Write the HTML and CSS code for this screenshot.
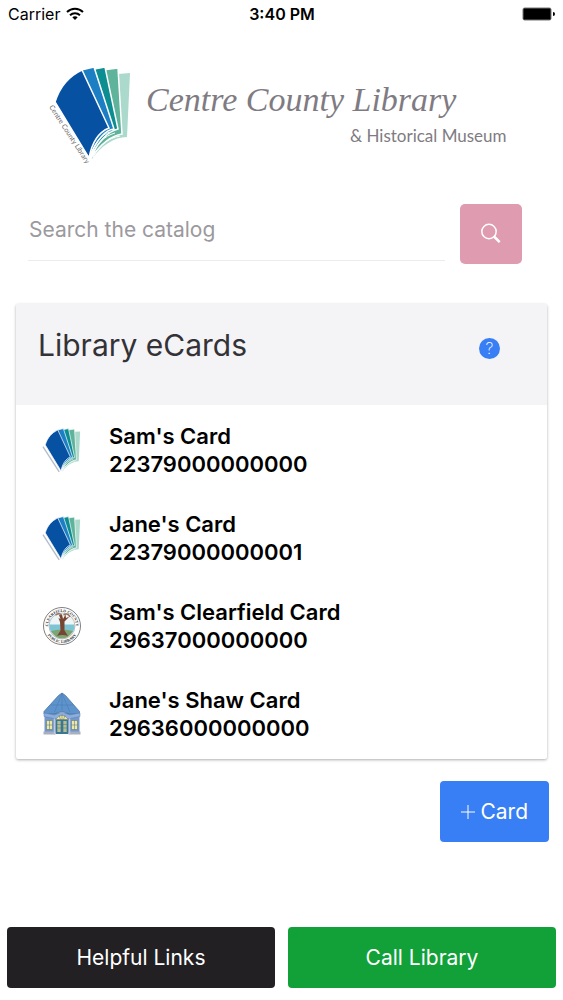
FILE: index.html
```html
<!DOCTYPE html>
<html lang="en">
<head>
<meta charset="utf-8">
<meta name="viewport" content="width=device-width, initial-scale=1">
<title>Centre County Library</title>
<link rel="stylesheet" href="styles.css">
</head>
<body>
<svg class="defs" width="0" height="0" aria-hidden="true">
  <symbol id="book" viewBox="0 0 86 98">
    <path d="M70 10 82 9 79 73C66 73 53 82 44 95L41 88 64 67Z" fill="#abd9cb"/>
    <path d="M54 6 70 4 74 70C60 72 50 84 43 94L58 62Z" fill="#5fb39b" stroke="#fff" stroke-width="1.5"/>
    <path d="M41 6 57 3 70 65C57 68 48 82 42 94L53 60Z" fill="#0c8d92" stroke="#fff" stroke-width="1.5"/>
    <path d="M29 7 46 3 66 65C55 66 47 80 41 94L48 58Z" fill="#1c7fc3" stroke="#fff" stroke-width="1.5"/>
    <path d="M7 38C12 22 21 12 34 6L61 64C51 68 44 78 41 94Z" fill="#0751a3" stroke="#fff" stroke-width="1.5"/>
    <path d="M42 93C46 80 52 71 62 68M43 93C49 80 56 72 67 69M45 93C52 81 60 74 72 72" fill="none" stroke="#fff"/>
  </symbol>
</svg>
<div class="app">
  <div class="status">
    <div class="carrier">Carrier
      <svg width="18" height="14" viewBox="0 0 18 14" fill="none" stroke="#000" stroke-width="2" aria-hidden="true"><path d="M1 5C5.500 .6 12.500 .6 17 5M4 8.200C6.800 5.500 11.200 5.500 14 8.200"/><path d="M6.300 10.300Q9 8 11.700 10.300L9 13Z" fill="#000" stroke="none"/></svg>
    </div>
    <div class="time">3:40 PM</div>
    <svg class="battery" width="34" height="14" viewBox="0 0 34 14" aria-hidden="true"><rect x="1" y="1" width="28" height="12" rx="1.500" stroke="#777"/><path d="M31 5Q33 5 33 7T31 9Z"/></svg>
  </div>

  <header class="brand">
    <svg class="brand-mark" width="86" height="100" viewBox="0 0 86 100" role="img" aria-label="Open book">
      <use href="#book" width="86" height="98"/>
      <text class="spine" transform="translate(1 43) rotate(57)">Centre County Library</text>
    </svg>
    <div class="brand-text">
      <div class="brand-name">Centre County Library</div>
      <div class="brand-sub">&amp; Historical Museum</div>
    </div>
  </header>

  <form class="search">
    <input type="search" aria-label="Search the catalog" placeholder="Search the catalog">
    <button class="search-btn" type="button" aria-label="Search">
      <svg width="22" height="22" viewBox="0 0 22 22" fill="none" stroke="#fff" aria-hidden="true"><circle cx="9" cy="8.500" r="7.200" stroke-width="1.500"/><path d="m14 13.500 5.700 5.700" stroke-width="2.500"/></svg>
    </button>
  </form>

  <main class="cards">
    <div class="cards-head">
      <h1>Library eCards</h1>
      <button class="help" type="button" aria-label="Help">?</button>
    </div>
    <ul>
      <li><svg class="thumb" viewBox="0 0 86 98" aria-hidden="true"><path d="m2 42 35 54" stroke="#b5bec8" stroke-width="3"/><use href="#book" width="86" height="98"/></svg><div><div>Sam's Card</div><div>22379000000000</div></div></li>
      <li><svg class="thumb" viewBox="0 0 86 98" aria-hidden="true"><path d="m2 42 35 54" stroke="#b5bec8" stroke-width="3"/><use href="#book" width="86" height="98"/></svg><div><div>Jane's Card</div><div>22379000000001</div></div></li>
      <li>
        <svg class="thumb" viewBox="0 0 80 90" aria-hidden="true">
          <defs><path id="ring-top" d="M12 45A28 28 0 0 1 68 45"/><path id="ring-bottom" d="M6 45A34 34 0 0 0 74 45"/></defs>
          <circle cx="40" cy="45" r="37" fill="#fff" stroke="#555" stroke-width="1.500"/>
          <circle cx="40" cy="45" r="26" fill="#eef5f6" stroke="#888"/>
          <path d="M15 42H65Q66 52 60 59H20Q14 52 15 42Z" fill="#7fc4d4"/>
          <path d="M18 55Q40 49 62 55Q54 70 40 70T18 55Z" fill="#7da574"/>
          <path d="M34 23 37 31 33 29 36 37 37 54 30 65Q40 61 52 65L45 54 45 36 55 26 48 29 47 22 42 31 40 22Z" fill="#774632"/>
          <path d="M27 23q8-5 12 0M43 23q9-5 13 4" fill="none" stroke="#9a7461" stroke-width="3"/>
          <text class="seal"><textPath href="#ring-top" startOffset="50%">CLEARFIELD COUNTY</textPath></text>
          <text class="seal"><textPath href="#ring-bottom" startOffset="50%">PUBLIC LIBRARY</textPath></text>
        </svg>
        <div><div>Sam's Clearfield Card</div><div>29637000000000</div></div>
      </li>
      <li>
        <svg class="thumb" viewBox="0 0 80 90" aria-hidden="true">
          <path d="M5 43H75V84H5Z" fill="#7297c8"/>
          <path d="M40 3 47 8 75 40V45H56L40 40 24 45H4V40L33 8Z" fill="#5e93cc" stroke="#426f9f" stroke-width="1.500"/>
          <path d="M40 4V38M40 4 25 41M40 4 56 41M18 27H62" fill="none" stroke="#4679b0"/>
          <path d="M4 43 25 47 40 41 55 47 76 43V50L56 54H24L4 50Z" fill="#8caede" stroke="#637eaa"/>
          <path d="M27 56Q40 39 53 56Z" fill="#f4e99b" stroke="#546878"/>
          <path d="M40 46V56M34 48 37 56M46 48 43 56" stroke="#546878"/>
          <path d="M28 57H52V85H28Z" fill="#397895"/>
          <path d="M31 59H37V81H31ZM43 59H49V81H43Z" fill="#dbd791"/>
          <path d="M9 58H21V76H9ZM59 58H71V76H59Z" fill="#eee8a2" stroke="#4f6e7e"/>
          <path d="M15 58V76M9 67H21M65 58V76M59 67H71M34 59V81M46 59V81M40 57V85M29 66H51M29 73H51" stroke="#477184"/>
          <path d="M3 80H27V86H3ZM53 80H77V86H53Z" fill="#a7afc0"/>
          <path d="M25 54V86M55 54V86" stroke="#bdc8e3" stroke-width="3"/>
        </svg>
        <div><div>Jane's Shaw Card</div><div>29636000000000</div></div>
      </li>
    </ul>
  </main>

  <div class="actions">
    <button class="btn add" type="button">
      <svg width="14" height="14" viewBox="0 0 14 14" stroke="#fff" aria-hidden="true"><path d="M7 0V14M0 7H14"/></svg>
      Card
    </button>
  </div>

  <footer class="footer">
    <button class="btn links" type="button">Helpful Links</button>
    <button class="btn call" type="button">Call Library</button>
  </footer>
</div>
</body>
</html>
```
FILE: styles.css
```css
* { box-sizing: border-box; }
body {
  margin: 0;
  background: #fff;
  color: #000;
  font-family: Inter, "Liberation Sans", sans-serif;
}
button, input { font: inherit; border: 0; }
.defs { display: block; position: absolute; }
.app {
  min-height: 100vh;
  display: flex;
  flex-direction: column;
}

.status {
  display: grid;
  grid-template-columns: 1fr auto 1fr;
  align-items: center;
  height: 28px;
  padding: 0 7px 0 8px;
  font-size: 16px;
}
.carrier { display: flex; align-items: center; gap: 6px; }
.time { font-weight: 600; }
.battery { justify-self: end; }

.brand {
  display: flex;
  gap: 12px;
  padding: 36px 60px 0 48px;
}
.brand-mark { flex: none; overflow: visible; }
.spine { font-family: Lato, sans-serif; font-size: 7px; fill: #666; }
.brand-text { flex: none; color: #807b82; }
.brand-name {
  font-family: "Liberation Serif", serif;
  font-style: italic;
  font-size: 34px;
  line-height: 40px;
  padding-top: 16px;
  white-space: nowrap;
}
.brand-sub {
  font-family: Lato, sans-serif;
  font-size: 17px;
  line-height: 20px;
  padding: 6px 0 0 204px;
  white-space: nowrap;
}

.search {
  display: flex;
  gap: 15px;
  padding: 40px 41px 0 28px;
}
.search input {
  flex: 1;
  min-width: 0;
  height: 57px;
  padding: 0 1px 6px;
  border-bottom: 1px solid #ececee;
  background: none;
  font-size: 21px;
  outline: none;
}
.search input::placeholder { color: #9b999e; opacity: 1; }
.search-btn {
  display: grid;
  place-items: center;
  width: 62px;
  height: 60px;
  border-radius: 5px;
  background: #df9bb0;
}

.cards {
  margin: 40px 16px 0;
  border-radius: 2px;
  background: #fff;
  box-shadow: 0 1px 3px rgba(0, 0, 0, .32);
}
.cards-head {
  display: flex;
  justify-content: space-between;
  align-items: flex-start;
  height: 101px;
  padding: 20px 47px 0 22px;
  background: #f4f3f6;
}
.cards h1 {
  margin: 0;
  font-size: 30px;
  font-weight: 400;
  line-height: 42px;
  color: #333236;
}
.help {
  width: 21px;
  height: 21px;
  margin-top: 14px;
  padding: 0;
  border-radius: 50%;
  background: #387ef5;
  color: #fff;
  font-size: 16px;
  font-weight: 200;
  line-height: 21px;
}
.cards ul { margin: 0; padding: 1px 0; list-style: none; }
.cards li {
  display: flex;
  align-items: center;
  gap: 27px;
  height: 88px;
  padding-left: 26px;
  font-size: 22px;
  font-weight: 600;
  line-height: 28px;
}
.thumb { flex: none; width: 40px; height: 46px; }
.seal {
  font-family: "Liberation Serif", serif;
  font-size: 8px;
  font-weight: 700;
  text-anchor: middle;
  fill: #333;
}

.btn {
  height: 61px;
  border-radius: 4px;
  color: #fff;
  font-size: 21px;
}
.actions {
  display: flex;
  justify-content: flex-end;
  padding: 22px 14px 24px;
}
.add {
  display: flex;
  align-items: center;
  gap: 5px;
  padding: 0 21px;
  background: #387ef5;
}
.footer {
  display: grid;
  grid-template-columns: 1fr 1fr;
  gap: 13px;
  margin-top: auto;
  padding: 0 7px 12px;
}
.links { background: #222023; }
.call { background: #11a138; }
```
